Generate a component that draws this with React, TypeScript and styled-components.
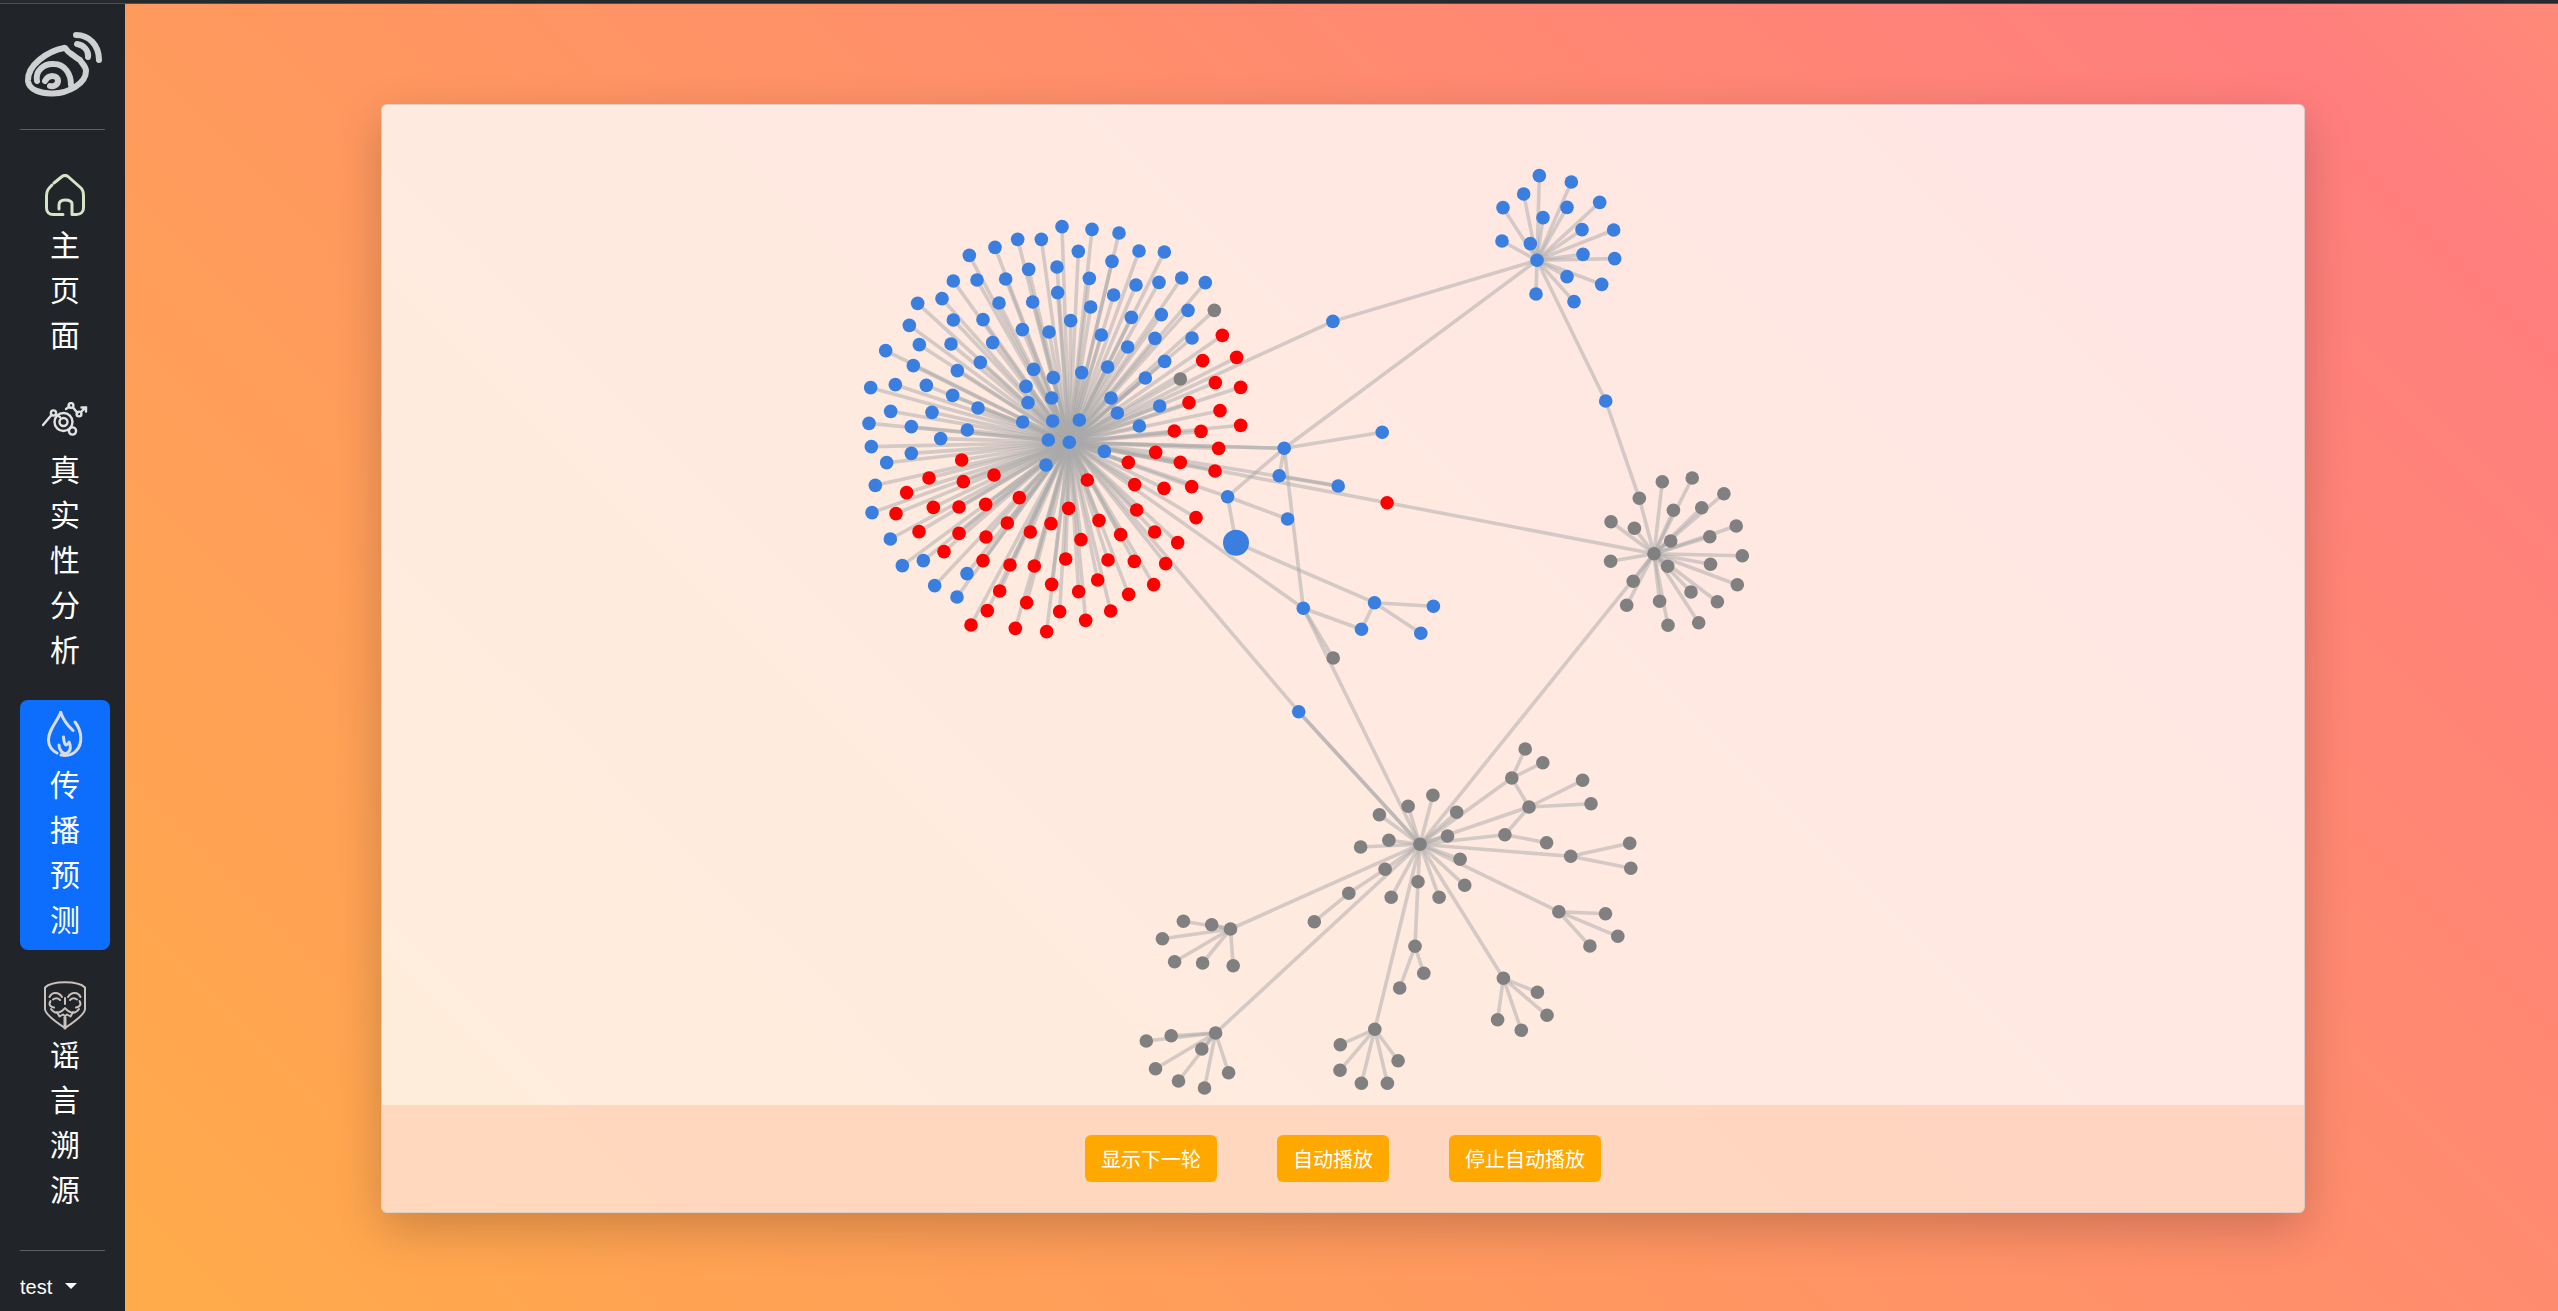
import React from "react";
import styled, { createGlobalStyle } from "styled-components";

type Pt = [number, number];

const BLUE = "#3a7fe0";
const GRAY = "#808080";
const RED = "#ff0000";

// points were read off a 3x crop of the picture, so they come in thirds of a pixel
const grid = (ox: number, oy: number, pts: number[][]): Pt[] =>
  pts.map(([x, y]) => [ox + x / 3, oy + y / 3] as Pt);

const mainHub: Pt = [1069.3, 442.3];
const topHub: Pt = [1537, 260.3];
const rightHub: Pt = [1654, 553.7];
const lowHub: Pt = [1420, 844.3];

const edges: [Pt, Pt][] = [];
const nodes: { p: Pt; c: string; r?: number }[] = [];

const fan = (color: string, from: Pt, pts: Pt[]) => {
  pts.forEach((p) => {
    edges.push([from, p]);
    nodes.push({ p, c: color });
  });
};
const link = (a: Pt, b: Pt) => edges.push([a, b]);

fan(BLUE, mainHub, grid(840, 200, [
  [666, 80], [756, 88], [837, 99], [533, 118], [604, 118], [465, 142], [388, 166], [715, 154],
  [816, 184], [897, 153], [973, 156], [566, 208], [651, 201], [748, 235], [888, 255], [957, 247],
  [1025, 234], [1096, 248], [340, 243], [411, 240], [497, 237], [653, 278], [821, 285], [306, 296],
  [233, 310], [477, 309], [578, 306], [752, 321], [1044, 331], [964, 344], [874, 352], [340, 360],
  [429, 359], [692, 362], [208, 376], [547, 389], [627, 396], [784, 405], [945, 415], [1056, 414],
  [238, 434], [333, 432], [458, 428], [863, 441], [137, 452], [220, 497], [421, 487], [974, 484],
  [352, 512], [581, 508], [803, 501], [725, 518], [640, 533], [916, 534], [92, 563], [166, 554],
  [259, 556], [558, 559], [338, 586], [635, 594], [813, 594], [564, 608], [414, 624], [959, 618],
  [832, 639], [152, 634], [276, 637], [638, 663], [718, 660], [548, 666], [87, 670], [214, 680],
  [382, 690], [898, 678], [302, 716],
]));
fan(GRAY, mainHub, grid(840, 200, [[1123, 331], [1021, 537]]));
fan(RED, mainHub, grid(840, 200, [
  [1147, 406], [1088, 482], [1190, 472], [1126, 548], [1202, 562], [1047, 608], [1140, 632],
  [1202, 676], [1003, 693], [1083, 694],
]));
fan(BLUE, mainHub, grid(840, 420, [
  [94, 80], [214, 100], [140, 128], [625, 60], [793, 94], [618, 135], [106, 196], [96, 278],
  [151, 357], [187, 437], [250, 422], [381, 461], [284, 497], [351, 531],
]));
fan(RED, mainHub, grid(840, 420, [
  [365, 120], [1136, 85], [947, 97], [1021, 127], [865, 127], [1125, 153], [267, 174], [462, 165],
  [370, 185], [742, 180], [884, 194], [972, 205], [1055, 200], [200, 218], [538, 233], [437, 253],
  [280, 262], [357, 261], [168, 281], [686, 265], [890, 270], [1068, 293], [502, 309], [633, 311],
  [777, 301], [237, 335], [357, 340], [571, 336], [438, 351], [723, 359], [842, 344], [944, 336],
  [1013, 368], [312, 395], [429, 422], [510, 435], [583, 438], [677, 417], [804, 420], [883, 424],
  [977, 431], [635, 493], [773, 480], [941, 494], [479, 513], [716, 515], [866, 523], [442, 572],
  [560, 548], [659, 575], [812, 573], [393, 615], [526, 625], [620, 635], [737, 601],
]));

fan(BLUE, topHub, grid(1460, 150, [
  [238, 77], [334, 96], [191, 132], [129, 173], [419, 157], [321, 172], [249, 203], [366, 239],
  [461, 240], [126, 273], [211, 281], [369, 313], [464, 326], [321, 380], [425, 403], [342, 455],
  [228, 432],
]));

const rightEntry: Pt = [1639.3, 498.3];
fan(GRAY, rightHub, [
  rightEntry, [1662.3, 481.7], [1692.2, 478], [1723.9, 493.7], [1701.7, 507.7], [1673.4, 510.3],
  [1611, 521.7], [1634.4, 528.3], [1670.7, 541], [1709.8, 536.7], [1736.2, 526], [1742.3, 555.7],
  [1710.5, 564.3], [1667.7, 566.3], [1610.6, 561.3], [1633.2, 581.3], [1626.7, 605.3],
  [1659.6, 601.3], [1691, 592], [1737.3, 584.7], [1717.4, 601.7], [1698.7, 622.7], [1668, 625.3],
]);

const lowA: Pt = [1385.1, 869.3];
const lowB: Pt = [1348.8, 893.3];
const lowC: Pt = [1511.8, 778];
const lowD: Pt = [1529, 807];
const lowE: Pt = [1504.9, 834.7];
const lowF: Pt = [1570.7, 856.3];
const lowG: Pt = [1558.8, 911.7];
const lowH: Pt = [1418, 881.7];
const lowI: Pt = [1415, 946.3];
const lowJ: Pt = [1503.4, 978.3];
const lowK: Pt = [1374.8, 1029.3];
const lowL: Pt = [1215.6, 1033];
const lowM: Pt = [1230.5, 929];

fan(GRAY, lowHub, [
  [1379.4, 814.7], [1408.1, 806.3], [1432.9, 795.3], [1456.7, 812.3], [1447.5, 836], [1388.9, 840.3],
  [1360.6, 847], lowA, [1391.2, 897.3], lowH, [1439.1, 897.3], [1460.1, 859.3], [1464.7, 885.3],
  lowC, lowD, lowE, lowF, lowG, lowJ, lowK, lowL, lowM,
]);
fan(GRAY, lowA, [lowB]);
fan(GRAY, lowB, [[1314.3, 921.7]]);
fan(GRAY, lowC, [[1525.2, 749], [1542.8, 762.7]]);
link(lowC, lowD);
fan(GRAY, lowD, [[1582.6, 780.3], [1591, 803.7]]);
link(lowD, lowE);
fan(GRAY, lowE, [[1546.6, 842.7]]);
fan(GRAY, lowF, [[1629.7, 843.3], [1630.8, 868.3]]);
fan(GRAY, lowG, [[1605.5, 913.7], [1617.8, 936.3], [1589.9, 946]]);
fan(GRAY, lowH, [lowI]);
fan(GRAY, lowI, [[1423.8, 973.3], [1399.7, 988]]);
fan(GRAY, lowJ, [[1537.4, 992.3], [1547, 1015.3], [1521.3, 1030.3], [1497.6, 1019.7]]);
fan(GRAY, lowK, [[1340.3, 1044.7], [1340, 1070.3], [1361.4, 1083.3], [1387.4, 1083.3], [1398.1, 1060.7]]);
fan(GRAY, lowL, [[1171.2, 1035.7], [1146.3, 1041], [1201.8, 1049], [1155.5, 1068.7], [1178.5, 1081], [1204.5, 1088], [1228.6, 1072.7]]);
fan(GRAY, lowM, [[1211.7, 924.7], [1183.4, 921.3], [1162.4, 938.7], [1174.6, 961.7], [1202.6, 963], [1233.2, 965.7]]);

const midA: Pt = [1284.2, 448.3];
const midB: Pt = [1279.2, 475.7];
const midC: Pt = [1338.2, 486];
const midD: Pt = [1227.6, 496.7];
const midE: Pt = [1287.6, 519];
const big: Pt = [1236, 542.7];
const midF: Pt = [1303.3, 608.3];
const midG: Pt = [1374.5, 602.7];
const midI: Pt = [1361.5, 629.3];
const midK: Pt = [1298.7, 711.7];
const midM: Pt = [1332.9, 321.4];
const midN: Pt = [1605.7, 401];
const midRed: Pt = [1387.1, 502.7];
const midGray: Pt = [1333.2, 658];

fan(BLUE, mainHub, [midA, midC, midD, midF, midK, midM]);
link(mainHub, midA);
fan(RED, mainHub, [midRed]);
fan(BLUE, midA, [[1382.2, 432.3], midB]);
link(midB, midC);
link(midA, midD);
link(midA, midF);
link(midA, topHub);
link(midM, topHub);
fan(BLUE, topHub, [midN]);
link(midN, rightEntry);
link(midRed, rightHub);
link(rightHub, lowHub);
fan(BLUE, midD, [midE]);
edges.push([midD, big]);
nodes.push({ p: big, c: BLUE, r: 13 });
edges.push([big, midG]);
nodes.push({ p: midG, c: BLUE });
fan(BLUE, midG, [[1433.4, 606.3], midI, [1420.8, 633.3]]);
link(midF, midI);
fan(GRAY, midF, [midGray]);
link(midF, lowHub);
link(midK, lowHub);
link(midK, lowHub);
nodes.push({ p: mainHub, c: BLUE });
nodes.push({ p: topHub, c: BLUE });
nodes.push({ p: rightHub, c: GRAY });
nodes.push({ p: lowHub, c: GRAY });

const GlobalStyle = createGlobalStyle`
  html, body {
    margin: 0;
    height: 100%;
    overflow: hidden;
    font-family: "Liberation Sans", "Noto Sans CJK SC", sans-serif;
  }
  * {
    box-sizing: border-box;
  }
`;

const Page = styled.div`
  width: 2558px;
  height: 1311px;
  display: flex;
  flex-direction: column;
`;
const TopStrip = styled.div`
  height: 4px;
  flex: none;
  background: #26292d;
  border-bottom: 1px solid #4d5053;
`;
const Row = styled.div`
  flex: 1;
  min-height: 0;
  display: flex;
`;
const Sidebar = styled.aside`
  width: 125px;
  flex: none;
  padding: 21px 20px 0;
  display: flex;
  flex-direction: column;
  background: #212529;
  color: #fff;
`;
const Logo = styled.svg`
  display: block;
  width: 90px;
  height: 80px;
  flex: none;
`;
const Divider = styled.hr<{ $top: number; $bottom: number }>`
  width: 85px;
  height: 1px;
  flex: none;
  border: 0;
  margin: ${(p) => p.$top}px 0 ${(p) => p.$bottom}px;
  background: #5d6063;
`;
const Nav = styled.nav`
  display: flex;
  flex-direction: column;
  gap: 20px;
`;
const NavItem = styled.a<{ $active?: boolean }>`
  display: block;
  width: 90px;
  padding: 8px 16px 9.5px;
  border-radius: 8px;
  font-family: "Noto Sans CJK SC", sans-serif;
  font-size: 30px;
  line-height: 45px;
  text-align: center;
  color: #fff;
  background: ${(p) => (p.$active ? "#0d6efd" : "transparent")};
`;
const IconSlot = styled.span`
  display: flex;
  height: 54px;
  margin-bottom: -1.5px;
  align-items: center;
  justify-content: center;
`;
const UserMenu = styled.div`
  display: flex;
  align-items: center;
  height: 30px;
  font-size: 20px;
  color: #fff;
`;
const Caret = styled.span`
  margin-left: 13px;
  margin-top: -3px;
  border-top: 6px solid #fff;
  border-left: 6px solid transparent;
  border-right: 6px solid transparent;
`;
const Main = styled.main`
  flex: 1;
  min-width: 0;
  display: flex;
  padding: 100px 253px 98px 256px;
  background: linear-gradient(45deg, #ffab4a 0%, #ff7e7e 92%, #ff8a78 100%);
`;
const Card = styled.section`
  flex: 1;
  min-width: 0;
  display: flex;
  flex-direction: column;
  overflow: hidden;
  border: 1px solid rgba(0, 0, 0, 0.125);
  border-radius: 6px;
  background: rgba(255, 255, 255, 0.8);
  box-shadow: 0 16px 48px rgba(0, 0, 0, 0.2);
`;
const GraphArea = styled.div`
  flex: 1;
  min-height: 0;
`;
const GraphSvg = styled.svg`
  display: block;
  width: 100%;
  height: 100%;
`;
const CardFooter = styled.footer`
  height: 107px;
  flex: none;
  display: flex;
  align-items: center;
  justify-content: center;
  gap: 60px;
  background: rgba(255, 150, 90, 0.24);
`;
const ActionButton = styled.button`
  height: 47px;
  padding: 0 16px;
  border: 0;
  border-radius: 6px;
  font-family: "Noto Sans CJK SC", sans-serif;
  font-size: 20px;
  color: #fff;
  background: #ffa800;
`;

const HomeIcon = () => (
  <svg width="40" height="42" viewBox="0 0 40 42" fill="none" stroke="#d5e4c6" strokeWidth="3" strokeLinecap="round" strokeLinejoin="round">
    <path d="M7 11C3 15 1.500 17 1.500 22V34C1.500 38 4 40.500 8 40.500H18" />
    <path d="M9 9L17 2.500C19 1 21 1 23 2.500L36 14C38 16 38.500 18 38.500 22V34C38.500 38 35.500 40.500 31.500 40.500H27V30C27 27 24 26 20 26C16 26 14 28 14 31V35" />
  </svg>
);

const AnalysisIcon = () => (
  <svg width="46" height="36" viewBox="0 0 46 36" fill="none" stroke="#e2e2e2" strokeWidth="2.400" strokeLinecap="round">
    <path d="M1 23L9.500 13" />
    <circle cx="11.500" cy="11" r="2.600" />
    <path d="M14 12.500L18 15" />
    <circle cx="21.500" cy="20" r="9" />
    <circle cx="21.500" cy="20" r="4" />
    <path d="M24 7L27.500 4.500" />
    <circle cx="29" cy="3.500" r="2.400" />
    <path d="M31 5.500L35.500 11" />
    <circle cx="37" cy="12" r="2.400" />
    <path d="M39 10L43 6M39.500 5.500H44V9.500" />
    <circle cx="30.500" cy="29" r="3.600" />
  </svg>
);

const FlameIcon = () => (
  <svg width="36" height="48" viewBox="17 7 36 48" fill="none" stroke="#d9dde0" strokeWidth="3" strokeLinecap="round" strokeLinejoin="round">
    <path d="M30.700 8.500C33 15 38 22 43 26.500" />
    <path d="M30.700 8.500C27 18 18 26 18.500 37C19 43 23 47 27 49" />
    <path d="M45 18C52 27 53 40 46 47C42 51 36 52 31 51" />
    <path d="M33.500 33C34 37 34 40 36 41C38 40 39 39 39 38C41 42 41 47 37 49C33 51 29 46 29 41" />
  </svg>
);

const MaskIcon = () => (
  <svg width="42" height="50" viewBox="14 8 42 50" fill="none" stroke="#c9c1bc" strokeWidth="2" strokeLinecap="round" strokeLinejoin="round">
    <path d="M15 15.500C22 8.500 48 8.500 55 15.500V37C55 43 41 52 35 56C29 52 15 43 15 37Z" />
    <path d="M19.500 25C22 19.500 29 20 32 25M38 25C41 20 48 19.500 50.500 25" />
    <path d="M23 27.500C25.500 25.500 28 26 30 28M40 28C42 26 44.500 25.500 47 27.500" />
    <path d="M20.500 29C18 33 21 35 24 35.500M49.500 29C52 33 49 35 46 35.500" />
    <path d="M35 26V32" />
    <path d="M21 37C25 43 31 41 35 36C39 41 45 43 49 37" />
    <path d="M27 40L29.500 44.500L33 42.500L35 44L37 42.500L40.500 44.500L43 40" />
    <path d="M35 45.500V56" strokeWidth="3" />
  </svg>
);

const WeiboLogo = () => (
  <Logo viewBox="0 0 90 80" fill="none" stroke="#cfd0d1" strokeWidth="6" strokeLinecap="round" strokeLinejoin="round">
    <path d="M44 23C28 26 7 40 8 56C9 65 21 69 33 68.500C48 68 66 59 66 46C66 41 62 39 60 35C56 33 53 30 50 28C47 27 46 22 44 23Z" />
    <path d="M17 56C15 46 24 38 34 39C44 39 51 48 51 60" />
    <path d="M25 56C29 49 38 50 38 56C38 60 33 62 30 61" />
    <path d="M56 10C69 10 79 20 79 35" />
    <path d="M57 19C64 20 69 26 68 32" />
  </Logo>
);

const App = () => {
  return (
    <Page>
      <GlobalStyle />
      <TopStrip />
      <Row>
        <Sidebar>
          <WeiboLogo />
          <Divider $top={24} $bottom={30} />
          <Nav>
            <NavItem>
              <IconSlot><HomeIcon /></IconSlot>
              主页面
            </NavItem>
            <NavItem>
              <IconSlot><AnalysisIcon /></IconSlot>
              真实性分析
            </NavItem>
            <NavItem $active>
              <IconSlot><FlameIcon /></IconSlot>
              传播预测
            </NavItem>
            <NavItem>
              <IconSlot><MaskIcon /></IconSlot>
              谣言溯源
            </NavItem>
          </Nav>
          <Divider $top={30} $bottom={21} />
          <UserMenu>
            test
            <Caret />
          </UserMenu>
        </Sidebar>
        <Main>
          <Card>
            <GraphArea>
              <GraphSvg viewBox="382 105 1922 1000">
                {edges.map(([a, b], i) => (
                  <line key={i} x1={a[0]} y1={a[1]} x2={b[0]} y2={b[1]} stroke="#aaa" strokeWidth="3.6" opacity="0.5" />
                ))}
                {nodes.map((n, i) => (
                  <circle key={i} cx={n.p[0]} cy={n.p[1]} r={n.r ?? 6.8} fill={n.c} />
                ))}
              </GraphSvg>
            </GraphArea>
            <CardFooter>
              <ActionButton>显示下一轮</ActionButton>
              <ActionButton>自动播放</ActionButton>
              <ActionButton>停止自动播放</ActionButton>
            </CardFooter>
          </Card>
        </Main>
      </Row>
    </Page>
  );
};

export default App;
